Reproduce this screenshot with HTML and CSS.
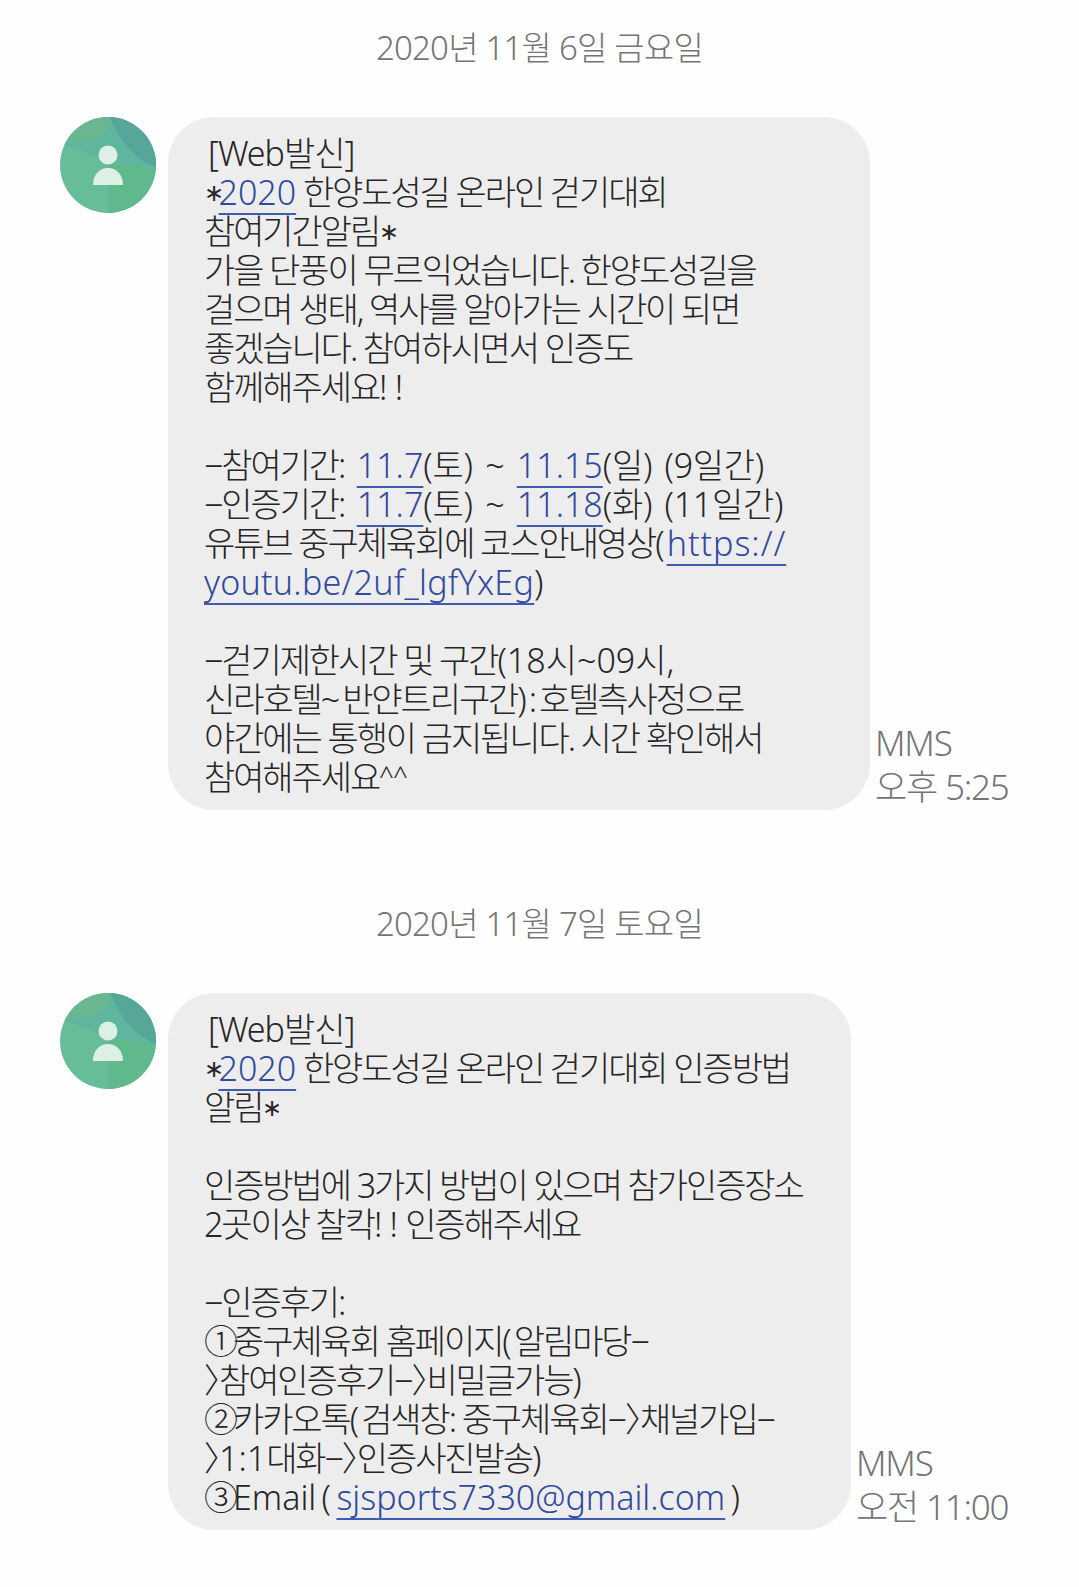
FILE: index.html
```html
<!DOCTYPE html>
<html lang="ko">
<head>
	<meta charset="utf-8">
	<title>메시지</title>
	<link rel="stylesheet" href="styles.css">
</head>
<body>
	<div class="date">2020년 11월 6일 금요일</div>
	<div class="row">
		<svg class="avatar" viewBox="0 0 96 96">
			<defs><clipPath id="round1"><circle cx="48" cy="48" r="48"/></clipPath></defs>
			<g clip-path="url(#round1)">
				<rect width="96" height="96" fill="#67bd98"/>
				<path d="M48 96V45L96 51V96Z" fill="#60b98c"/>
				<path d="M0 0H68V50L53 45L0 26Z" fill="#69b690"/>
				<path d="M0 26C20 32 36 40 53 45C68 48 82 50 96 51V30L68 0H50C52 15 40 26 0 26Z" fill="#5fb69f"/>
				<path d="M50 0C60 25 75 42 96 51V0Z" fill="#56a699"/>
				<circle cx="48" cy="38" r="9.5" fill="#dcf0e6"/>
				<path d="M33 68C33 57 40 51 48 51C56 51 63 57 63 68Z" fill="#dcf0e6"/>
			</g>
		</svg>
		<div class="bubble">
			<span class="head">[Web발신]</span><br>
			<span class="star">∗</span><a class="link">2020</a> 한양도성길 온라인 걷기대회<br>
			참여기간알림<span class="star">∗</span><br>
			가을 단풍이 무르익었습니다. 한양도성길을<br>
			걸으며 생태, 역사를 알아가는 시간이 되면<br>
			좋겠습니다. 참여하시면서 인증도<br>
			함께해주세요<span class="bang">! !</span><br>
			<br>
			−참여기간:<span class="wide"> <a class="link">11.7</a>(토) ~ <a class="link">11.15</a>(일) (9일간)</span><br>
			−인증기간:<span class="wide"> <a class="link">11.7</a>(토) ~ <a class="link">11.18</a>(화) (11일간)</span><br>
			유튜브 중구체육회에 코스안내영상<span class="gap">(</span><a class="link link-wide">https://</a><br>
			<a class="link url">youtu.be/2uf_lgfYxEg</a>)<br>
			<br>
			−걷기제한시간 및 구간<span class="latin">(18시~09시,</span><br>
			신라호텔<span class="gap">~</span>반얀트리구간<span class="gap">):</span>호텔측사정으로<br>
			야간에는 통행이 금지됩니다. 시간 확인해서<br>
			참여해주세요<span class="caret">^^</span>
		</div>
		<div class="meta">MMS<br>오후 5:25</div>
	</div>

	<div class="date">2020년 11월 7일 토요일</div>
	<div class="row">
		<svg class="avatar" viewBox="0 0 96 96">
			<defs><clipPath id="round2"><circle cx="48" cy="48" r="48"/></clipPath></defs>
			<g clip-path="url(#round2)">
				<rect width="96" height="96" fill="#67bd98"/>
				<path d="M48 96V45L96 51V96Z" fill="#60b98c"/>
				<path d="M0 0H68V50L53 45L0 26Z" fill="#69b690"/>
				<path d="M0 26C20 32 36 40 53 45C68 48 82 50 96 51V30L68 0H50C52 15 40 26 0 26Z" fill="#5fb69f"/>
				<path d="M50 0C60 25 75 42 96 51V0Z" fill="#56a699"/>
				<circle cx="48" cy="38" r="9.5" fill="#dcf0e6"/>
				<path d="M33 68C33 57 40 51 48 51C56 51 63 57 63 68Z" fill="#dcf0e6"/>
			</g>
		</svg>
		<div class="bubble bubble-short">
			<span class="head">[Web발신]</span><br>
			<span class="star">∗</span><a class="link">2020</a> 한양도성길 온라인 걷기대회 인증방법<br>
			알림<span class="star">∗</span><br>
			<br>
			인증방법에 3가지 방법이 있으며 참가인증장소<br>
			2곳이상 찰칵<span class="bang">! ! </span>인증해주세요<br>
			<br>
			−인증후기:<br>
			<span class="circled">①</span>중구체육회 홈페이지<span class="gap">(</span>알림마당−<br>
			<span class="arrow">〉</span>참여인증후기−<span class="arrow">〉</span>비밀글가능)<br>
			<span class="circled">②</span>카카오톡<span class="gap">(</span>검색창: 중구체육회−<span class="arrow">〉</span>채널가입−<br>
			<span class="arrow">〉</span><span class="latin">1:1</span>대화−<span class="arrow">〉</span>인증사진발송)<br>
			<span class="circled">③</span><span class="latin email">Email ( </span><a class="link">sjsports7330@gmail.com</a><span class="latin email"> )</span>
		</div>
		<div class="meta">MMS<br>오전 11:00</div>
	</div>
</body>
</html>
```

FILE: styles.css
```css
body {
	margin: 0;
	background: #fefefe;
	font-family: "Noto Sans", "Noto Sans CJK KR", sans-serif;
	font-weight: 300;
}
.date {
	padding: 25px 0 46px;
	font-size: 33px;
	line-height: 46px;
	letter-spacing: -0.8px;
	text-align: center;
	color: #757575;
}
.row {
	display: flex;
	align-items: flex-start;
	margin-bottom: 66px;
	padding-left: 60px;
}
.avatar {
	flex: none;
	width: 96px;
	height: 96px;
	margin-right: 12px;
}
.bubble {
	flex: none;
	box-sizing: border-box;
	width: 702px;
	padding: 17px 0 13px 36px;
	border-radius: 46px;
	background: #ededed;
	color: #262626;
	font-size: 34px;
	line-height: 39px;
	letter-spacing: -2.1px;
	white-space: nowrap;
}
.bubble-short {
	width: 683px;
}
.head {
	padding-left: 4px;
	letter-spacing: -1px;
}
.link {
	color: #2f4a9e;
	letter-spacing: 0;
	text-decoration: underline;
	text-decoration-color: #3f5cb0;
	text-decoration-thickness: 1.5px;
	text-underline-offset: 8px;
}
.link-wide {
	letter-spacing: 1px;
}
.url {
	letter-spacing: 0.25px;
}
.star {
	font-size: 24px;
	line-height: 0;
	letter-spacing: -5.5px;
	vertical-align: 4px;
}
.caret {
	font-size: 26px;
	line-height: 0;
	letter-spacing: -1px;
	vertical-align: 5px;
}
.wide {
	letter-spacing: -0.3px;
	word-spacing: 4px;
}
.latin {
	letter-spacing: 0;
}
.email {
	word-spacing: -3.5px;
}
.gap {
	letter-spacing: 2px;
}
.bang {
	letter-spacing: -0.8px;
}
.circled {
	letter-spacing: -5px;
}
.arrow {
	letter-spacing: -19px;
}
.meta {
	align-self: flex-end;
	margin-left: 5px;
	margin-bottom: 1px;
	color: #757575;
	font-size: 35px;
	line-height: 44px;
	letter-spacing: -1.2px;
	white-space: nowrap;
}
```
